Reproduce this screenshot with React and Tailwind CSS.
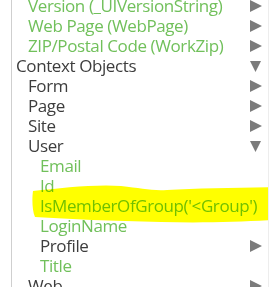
import React from 'react';

const rows = [
    { label: 'Version (_UIVersionString)', level: 1, kind: 'field', arrow: 'right' },
    { label: 'Web Page (WebPage)', level: 1, kind: 'field', arrow: 'right' },
    { label: 'ZIP/Postal Code (WorkZip)', level: 1, kind: 'field', arrow: 'right' },
    { label: 'Context Objects', level: 0, kind: 'node', arrow: 'down' },
    { label: 'Form', level: 1, kind: 'node', arrow: 'right' },
    { label: 'Page', level: 1, kind: 'node', arrow: 'right' },
    { label: 'Site', level: 1, kind: 'node', arrow: 'right' },
    { label: 'User', level: 1, kind: 'node', arrow: 'down' },
    { label: 'Email', level: 2, kind: 'field' },
    { label: 'Id', level: 2, kind: 'field' },
    { label: "IsMemberOfGroup('<Group')", level: 2, kind: 'field' },
    { label: 'LoginName', level: 2, kind: 'field' },
    { label: 'Profile', level: 2, kind: 'node', arrow: 'right' },
    { label: 'Title', level: 2, kind: 'field' },
    { label: 'Web', level: 1, kind: 'node', arrow: 'right' },
];

const indent = ['pl-[4px]', 'pl-[16px]', 'pl-[28px]'];

const Arrow = ({ dir }) => (
    <svg width="12" height="12" viewBox="0 0 12 12" className="shrink-0">
        {dir === 'down'
            ? <polygon points="0,1 11,1 5.5,12" fill="#7b7b7b" />
            : <polygon points="0,0 12,6 0,12" fill="#7b7b7b" />}
    </svg>
);

const App = () => {
    return (
        <div className="w-[277px] h-[297px] bg-white overflow-hidden" style={{ fontFamily: '"Open Sans", "Noto Sans", sans-serif' }}>
            <div className="relative ml-[11px] w-[258px] h-[287px] border-l border-l-[#cfcfcf] border-r border-r-[#ededed] overflow-hidden">
                <ul className="-mt-[4px]">
                    {rows.map((r) => (
                        <li key={r.label} className={`h-[20px] flex items-center justify-between pr-[6px] ${indent[r.level]}`}>
                            <span className={`text-[17px] leading-[20px] whitespace-nowrap tracking-[-0.4px] ${r.kind === 'field' ? 'text-[#71c05b]' : 'text-[#3d3d3d]'}`}>
                                {r.label}
                            </span>
                            {r.arrow && <Arrow dir={r.arrow} />}
                        </li>
                    ))}
                </ul>

                {/* marker highlight over IsMemberOfGroup */}
                <svg className="absolute left-[-11px] top-0 pointer-events-none mix-blend-multiply" width="277" height="287">
                    <path
                        d="M32,191 C60,188 95,184 120,186 C140,188 150,191 166,190 C195,188 235,188 272,187 L272,220 C240,222 200,223 160,222 C110,221 70,219 34,217 C31,210 31,198 32,191 Z"
                        fill="#ffff00"
                    />
                </svg>
            </div>
        </div>
    );
};

export default App;
